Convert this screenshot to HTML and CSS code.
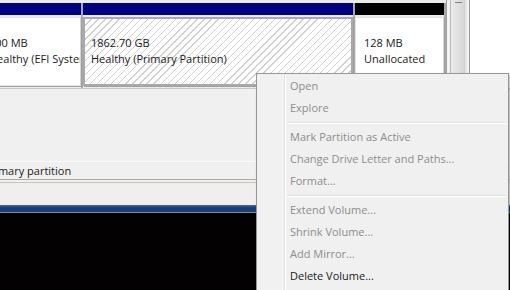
FILE: index.html
```html
<!DOCTYPE html>
<html lang="en">
<head>
    <meta charset="UTF-8">
    <title>Disk Management</title>
    <link rel="stylesheet" href="styles.css">
</head>
<body>
    <div class="console">
        <div class="disk-row">
            <div class="part efi">
                <div class="part-bar"></div>
                <div class="part-body">
                    <span>200 MB</span>
                    <span>Healthy (EFI System Partition)</span>
                </div>
            </div>
            <div class="part primary selected">
                <div class="part-bar"></div>
                <div class="part-body">
                    <span>1862.70 GB</span>
                    <span>Healthy (Primary Partition)</span>
                </div>
            </div>
            <div class="part unalloc">
                <div class="part-bar"></div>
                <div class="part-body">
                    <span>128 MB</span>
                    <span>Unallocated</span>
                </div>
            </div>
            <div class="scrollbar"><div class="grip"></div></div>
            <div class="blank"></div>
        </div>
        <div class="disk-space"></div>
        <div class="legend">
            <span class="legend-text">Primary partition</span>
        </div>
        <div class="status-strip"></div>
        <div class="title-bar"></div>
        <div class="desktop"></div>
    </div>

    <ul class="context-menu">
        <li class="disabled">Open</li>
        <li class="disabled">Explore</li>
        <li class="sep"></li>
        <li class="disabled">Mark Partition as Active</li>
        <li class="disabled">Change Drive Letter and Paths...</li>
        <li class="disabled">Format...</li>
        <li class="sep"></li>
        <li class="disabled">Extend Volume...</li>
        <li class="disabled">Shrink Volume...</li>
        <li class="disabled">Add Mirror...</li>
        <li>Delete Volume...</li>
    </ul>
</body>
</html>
```

FILE: styles.css
```css
body {
    margin: 0;
    width: 510px;
    height: 290px;
    overflow: hidden;
    font-family: "Open Sans", "Noto Sans", sans-serif;
    font-size: 11px;
    color: #1a1a1a;
    background-color: #f0f0f0;
}

.console {
    display: flex;
    flex-direction: column;
    height: 290px;
}

/* ディスクの行 */
.disk-row {
    display: flex;
    height: 88px;
    padding-top: 3px;
    box-sizing: border-box;
    background-color: #ececec;
}

.part {
    display: flex;
    flex-direction: column;
    padding-right: 2px;
    background: linear-gradient(90deg, transparent 0, transparent calc(100% - 2px), #a9a9a9 calc(100% - 2px));
}

.part-bar {
    height: 12px;
    background-color: #000080;
}

.unalloc .part-bar {
    background-color: #000000;
}

.part-body {
    flex: 1;
    display: flex;
    flex-direction: column;
    margin: 2px 0 2px 0;
    padding: 17px 0 0 8px;
    background-color: #ffffff;
    border: 1px solid #e3e3e3;
    border-right-color: #d6d6d6;
    box-shadow: 1px 1px 0 #9f9f9f;
    line-height: 16px;
    white-space: nowrap;
    overflow: hidden;
}

.efi {
    width: 101px;
    margin-left: -20px;
}

.primary {
    width: 270px;
}

.selected .part-body {
    border: 2px solid #a9a9a9;
    padding: 16px 0 0 6px;
    background-image: repeating-linear-gradient(135deg, #ffffff 0 4px, #d0d0d0 4px 5px);
}

.unalloc {
    width: 89px;
}

.scrollbar {
    width: 22px;
    margin-top: -3px;
    border-left: 1px solid #a0a0a0;
    border-right: 1px solid #9a9a9a;
    background: linear-gradient(90deg, #f4f4f4 0, #f4f4f4 3px, #b8b8b8 3px, #b8b8b8 4px, #ececec 4px, #d4d4d4 18px, #f2f2f2 20px);
}

.grip {
    width: 7px;
    height: 1px;
    margin: 2px 0 0 8px;
    background-color: #7f7f7f;
}

.blank {
    flex: 1;
    background-color: #ffffff;
    margin-top: -3px;
}

.disk-space {
    height: 72px;
    border-top: 1px solid #c9c9c9;
    background-color: #f0f0f0;
}

.legend {
    height: 17px;
    border-top: 1px solid #fafafa;
    border-bottom: 1px solid #a9a9a9;
    line-height: 17px;
    overflow: hidden;
    white-space: nowrap;
}

.legend-text {
    margin-left: -16px;
}

.status-strip {
    height: 22px;
    margin-top: 2px;
    border-top: 1px solid #c4c4c4;
    background-color: #f1efee;
}

.title-bar {
    height: 7px;
    background: linear-gradient(#4e6894, #173a7a 40%, #1d3f7e);
    border-bottom: 1px solid #8a8a8a;
}

.desktop {
    flex: 1;
    background-color: #030101;
}

/* 右クリックメニュー */
.context-menu {
    position: absolute;
    left: 256px;
    top: 73px;
    width: 251px;
    height: 240px;
    margin: 0;
    padding: 1px 0 0 0;
    list-style: none;
    background-color: #f0f0f0;
    border: 1px solid #979797;
    box-shadow: 2px 2px 3px rgba(0, 0, 0, 0.25);
    background-image: linear-gradient(90deg, #f1f1f1 0, #f1f1f1 27px, #e2e3e3 27px, #e2e3e3 28px, #ffffff 28px, #ffffff 29px, transparent 29px);
}

.context-menu li {
    height: 22px;
    line-height: 22px;
    padding-left: 33px;
    white-space: nowrap;
    color: #1a1a1a;
}

.context-menu li.disabled {
    color: #8d8d8d;
}

.context-menu li.sep {
    height: 7px;
    padding: 0;
    margin-left: 30px;
    margin-right: 2px;
    background: linear-gradient(#f0f0f0 0, #f0f0f0 3px, #e2e3e3 3px, #e2e3e3 4px, #ffffff 4px, #ffffff 5px, #f0f0f0 5px);
}
```
